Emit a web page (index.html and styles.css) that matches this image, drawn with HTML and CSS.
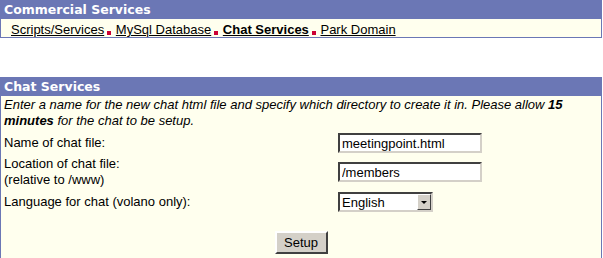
FILE: index.html
```html
<!DOCTYPE html>
<html lang="en">
<head>
    <meta charset="UTF-8">
    <title>Chat Services</title>
    <link rel="stylesheet" href="styles.css">
</head>
<body>
    <div class="box nav-box">
        <div class="box-title">Commercial Services</div>
        <div class="nav">
            <a href="#">Scripts/Services</a><span class="dot"></span>
            <a href="#">MySql Database</a><span class="dot"></span>
            <a href="#" class="current">Chat Services</a><span class="dot"></span>
            <a href="#">Park Domain</a>
        </div>
    </div>

    <div class="box chat-box">
        <div class="box-title">Chat Services</div>
        <div class="box-body">
            <p class="intro">Enter a name for the new chat html file and specify which directory to create it in. Please allow <b>15</b> <b>minutes</b> for the chat to be setup.</p>
            <div class="form-row row-name">
                <label for="chat-file">Name of chat file:</label>
                <input type="text" id="chat-file" value="meetingpoint.html">
            </div>
            <div class="form-row row-dir">
                <label for="chat-dir">Location of chat file:<br>(relative to /www)</label>
                <input type="text" id="chat-dir" value="/members">
            </div>
            <div class="form-row row-lang">
                <label for="chat-lang">Language for chat (volano only):</label>
                <div class="select">
                    <span class="select-value">English</span>
                    <span class="select-arrow"></span>
                </div>
            </div>
            <div class="actions">
                <button type="button" class="btn">Setup</button>
            </div>
        </div>
    </div>
</body>
</html>
```

FILE: styles.css
```css
body {
    margin: 0;
    padding: 0;
    width: 603px;
    font-family: "Liberation Sans", Arial, sans-serif;
    font-size: 13px;
    color: #000;
    background-color: #fff;
}
.box {
    width: 600px;
    border: 1px solid #6b77b5;
    border-top: none;
    background-color: #ffffee;
}
.box-title {
    background-color: #6b77b5;
    color: #fff;
    font-family: "DejaVu Sans", Verdana, sans-serif;
    font-weight: bold;
    font-size: 12.5px;
    height: 19px;
    line-height: 19px;
    padding-left: 3px;
}
.nav {
    height: 18px;
    line-height: 17px;
    padding-top: 2px;
    box-sizing: border-box;
    padding-left: 10px;
}
.nav a {
    color: #000;
}
.nav a.current {
    font-weight: bold;
}
.dot {
    display: inline-block;
    width: 4px;
    height: 4px;
    background-color: #cc0033;
    margin: 0 1px 0 3px;
    vertical-align: -1px;
}
.chat-box {
    margin-top: 39px;
}
.box-body {
    padding: 0 3px 4px 3px;
}
.intro {
    margin: 1px 0 2px 0;
    font-style: italic;
    line-height: 16px;
}
.form-row {
    display: grid;
    grid-template-columns: 334px auto;
    align-items: center;
}
.row-name {
    height: 24px;
}
.row-dir {
    height: 34px;
}
.row-lang {
    height: 26px;
}
.form-row label {
    line-height: 16px;
}
.form-row input {
    width: 136px;
    height: 15px;
    padding: 1px 2px 0 2px;
    margin: 0;
    font-family: "Liberation Sans", Arial, sans-serif;
    font-size: 13px;
    border: 2px solid;
    border-color: #404040 #d4d0c8 #d4d0c8 #404040;
    background-color: #fff;
}
.select {
    display: flex;
    align-items: center;
    width: 89px;
    height: 16px;
    border: 2px solid;
    border-color: #404040 #d4d0c8 #d4d0c8 #404040;
    background-color: #fff;
    padding-left: 2px;
}
.select-value {
    flex-grow: 1;
}
.select-arrow {
    width: 12px;
    height: 14px;
    background-color: #d4d0c8;
    border: 1px solid;
    border-color: #fff #404040 #404040 #fff;
    position: relative;
}
.select-arrow::after {
    content: "";
    position: absolute;
    left: 3px;
    top: 6px;
    border-left: 3px solid transparent;
    border-right: 3px solid transparent;
    border-top: 3px solid #000;
}
.actions {
    text-align: center;
    padding-top: 16px;
}
.btn {
    font-family: "Liberation Sans", Arial, sans-serif;
    font-size: 13px;
    width: 53px;
    height: 23px;
    padding: 0;
    background-color: #d4d0c8;
    border: 2px solid;
    border-color: #fff #404040 #404040 #fff;
    color: #000;
    vertical-align: top;
}
```
